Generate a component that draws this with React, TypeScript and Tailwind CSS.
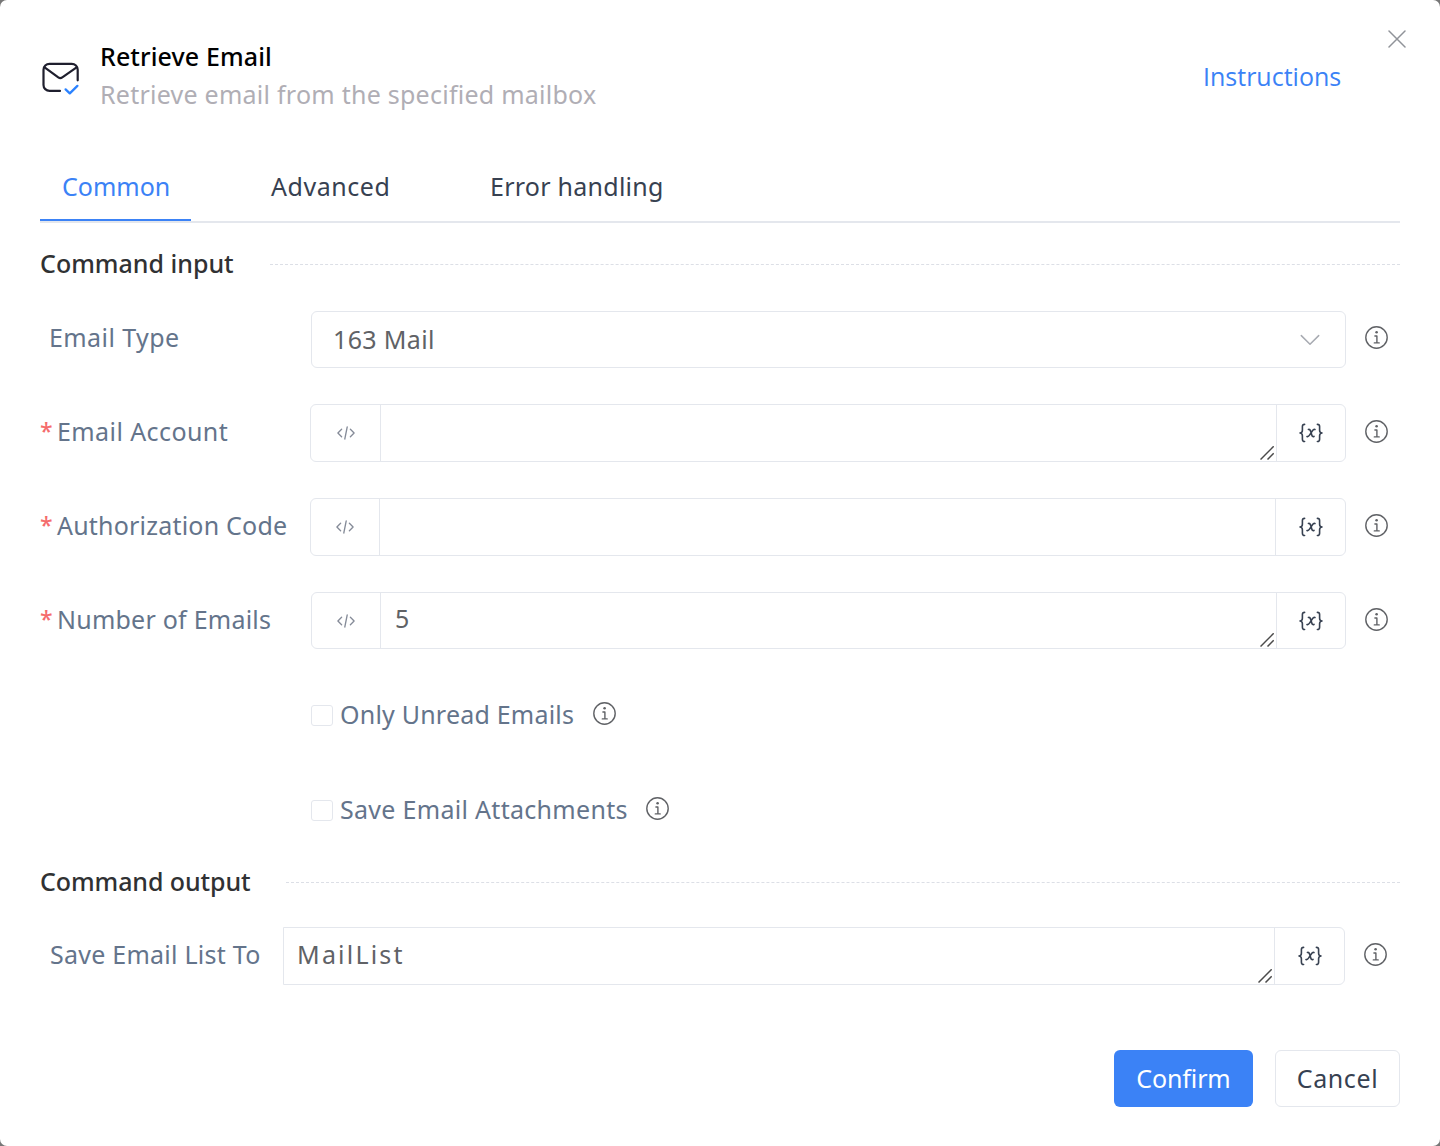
import type { ReactNode } from "react";

function MailCheckIcon() {
  return (
    <svg className="mt-[23px] h-[36px] w-[40px] shrink-0" viewBox="0 0 40 36" fill="none" strokeLinecap="round" strokeLinejoin="round">
      <path d="M20 29.9H9.5A6 6 0 0 1 3.5 23.9V8.8A6 6 0 0 1 9.5 2.8H31.7A6 6 0 0 1 37.7 8.8V19.3" stroke="#1f1f2e" strokeWidth="2.2" />
      <path d="M4.6 6.4L18.3 16.4C19.6 17.3 21 17.3 22.3 16.4L36.6 6.4" stroke="#1f1f2e" strokeWidth="2.2" />
      <path d="M25.6 28.4L29.8 32.4L37.4 24.9" stroke="#2b82ff" strokeWidth="2.3" />
    </svg>
  );
}

function CloseIcon() {
  return (
    <svg className="h-[18px] w-[18px]" viewBox="0 0 18 18" fill="none" stroke="#909399" strokeWidth="1.5" strokeLinecap="round">
      <path d="M1 1L17 17M17 1L1 17" />
    </svg>
  );
}

function InfoIcon({ className = "" }: { className?: string }) {
  return (
    <svg className={`h-[23px] w-[23px] shrink-0 ${className}`} viewBox="0 0 23 23" fill="none" stroke="#606266" strokeLinecap="round" strokeLinejoin="round">
      <circle cx="11.5" cy="11.5" r="10.7" strokeWidth="1.4" />
      <circle cx="11.6" cy="6.3" r="1.3" fill="#606266" stroke="none" />
      <path d="M9.9 10H11.9V16.8M9.3 16.9H14.2" strokeWidth="1.4" />
    </svg>
  );
}

function VariableIcon() {
  return (
    <svg className="h-[20px] w-[24px]" viewBox="0 0 24 20" fill="none" stroke="#374151" strokeWidth="1.6" strokeLinecap="round" strokeLinejoin="round">
      <path d="M5.6 1.4C3.8 1.4 3.4 2.2 3.4 3.6V7.2C3.4 8.9 2.6 9.8 1 10C2.6 10.2 3.4 11.1 3.4 12.8V16.2C3.4 17.8 3.9 18.5 5.6 18.5" />
      <path d="M18.4 1.4C20.2 1.4 20.6 2.2 20.6 3.6V7.2C20.6 8.9 21.4 9.8 23 10C21.4 10.2 20.6 11.1 20.6 12.8V16.2C20.6 17.8 20.1 18.5 18.4 18.5" />
      <path d="M9.4 6.4C10.8 6 11.2 6.8 11.6 8.2L12.8 12C13.2 13.4 13.8 13.9 15 13.4M16 6.5C14.8 6.1 14 6.9 13.1 8.2L10.7 11.9C9.8 13.3 9 13.9 8 13.5" />
    </svg>
  );
}

function CodeIcon() {
  return (
    <svg className="h-[14px] w-[18px]" viewBox="0 0 18 14" fill="none" stroke="#858b98" strokeWidth="1.3" strokeLinecap="round" strokeLinejoin="round">
      <path d="M4.6 3.3L0.9 7L4.6 10.7M13.4 3.3L17.1 7L13.4 10.7M10.2 1L7.8 13" />
    </svg>
  );
}

function ResizeHandle() {
  return (
    <svg className="mb-px mr-[2px] h-[14px] w-[14px] self-end" viewBox="0 0 14 14" fill="none" stroke="#4b4b4b" strokeWidth="1.5">
      <path d="M0.5 13.5L13.7 0.3M7.5 13.5L13.7 7.3" />
    </svg>
  );
}

function SectionTitle({ title, className, lineClass }: { title: string; className: string; lineClass: string }) {
  return (
    <div className={`flex h-[36px] items-start ${className}`}>
      <h2 className={`shrink-0 whitespace-nowrap font-medium text-[#303133] ${lineClass}`}>{title}</h2>
      <div className="mt-[19px] flex-1 border-t border-dashed border-[#dcdfe6]" />
    </div>
  );
}

function Label({ text, required, className }: { text: string; required?: boolean; className: string }) {
  return (
    <div className={`flex shrink-0 whitespace-nowrap text-[#64748b] ${className}`}>
      {required && <span className="w-[17px] text-[23px] font-medium tracking-normal text-[#f56c6c]">*</span>}
      <span>{text}</span>
    </div>
  );
}

interface FieldProps {
  label: string;
  required?: boolean;
  rowClass: string;
  labelClass: string;
  boxClass: string;
  prefixClass?: string;
  suffixClass: string;
  resizable?: boolean;
  children?: ReactNode;
}

function Field({ label, required, rowClass, labelClass, boxClass, prefixClass, suffixClass, resizable, children }: FieldProps) {
  return (
    <div className={`flex items-start ${rowClass}`}>
      <Label text={label} required={required} className={labelClass} />
      <div className={`flex h-full border border-[#e4e7ed] ${boxClass}`}>
        {prefixClass && (
          <div className={`flex shrink-0 items-center justify-center border-r border-[#e4e7ed] ${prefixClass}`}>
            <CodeIcon />
          </div>
        )}
        <div className="flex flex-1 justify-between text-[#606266]">
          <div>{children}</div>
          {resizable && <ResizeHandle />}
        </div>
        <div className={`flex shrink-0 items-center justify-center border-l border-[#e4e7ed] ${suffixClass}`}>
          <VariableIcon />
        </div>
      </div>
      <InfoIcon className="ml-[19px] mt-[16px]" />
    </div>
  );
}

function Checkbox({ label, rowClass, labelClass }: { label: string; rowClass: string; labelClass: string }) {
  return (
    <div className={`flex h-[36px] items-start pl-[271px] ${rowClass}`}>
      <span className="mt-[9px] h-[21px] w-[22px] shrink-0 rounded-[3px] border border-[#e4e7ed]" />
      <span className={`ml-[7px] shrink-0 whitespace-nowrap text-[#64748b] ${labelClass}`}>{label}</span>
      <InfoIcon className="mt-[6px]" />
    </div>
  );
}

export default function App() {
  return (
    <div className="h-[1146px] w-[1440px] bg-[#777777]">
      <div className="flex h-full flex-col rounded-[7px] bg-white px-[40px] font-['Noto_Sans','Open_Sans',sans-serif] text-[25px] leading-[36px]">
        <header className="flex h-[168px] items-start pt-[38px]">
          <MailCheckIcon />
          <div className="ml-[20px] flex flex-col gap-[2px] whitespace-nowrap">
            <h1 className="font-medium tracking-[0.11px] text-black">Retrieve Email</h1>
            <p className="tracking-[0.25px] text-[#b0aeb5]">Retrieve email from the specified mailbox</p>
          </div>
          <a className="ml-auto mt-[20px] w-[140px] whitespace-nowrap font-['Open_Sans',sans-serif] text-[#3b82f6]">Instructions</a>
          <button className="-mr-[6px] -mt-[8px] ml-[45px]" aria-label="Close">
            <CloseIcon />
          </button>
        </header>

        <nav className="flex h-[55px] items-start whitespace-nowrap border-b-2 border-[#e4e7ed] text-[#374151]">
          <div className="h-[53px] w-[151px] border-b-2 border-[#3b82f6] pl-[22px] text-[#3b82f6]">Common</div>
          <div className="ml-[57px] w-[164px] pl-[23px] tracking-[0.55px]">Advanced</div>
          <div className="ml-[55px] pl-[23px] tracking-[0.26px]">Error handling</div>
        </nav>

        <SectionTitle title="Command input" className="mt-[22px]" lineClass="w-[230px]" />

        <div className="mt-[30px] flex h-[57px] items-start">
          <Label text="Email Type" className="w-[271px] pl-[9px] pt-[8px] tracking-[0.42px]" />
          <div className="flex h-full w-[1035px] items-start justify-between rounded-[6px] border border-[#e4e7ed] pl-[21px] pr-[25px] pt-[9px] tracking-[0.35px] text-[#606266]">
            <span>163 Mail</span>
            <svg className="mt-[13px] h-[12px] w-[20px]" viewBox="0 0 20 12" fill="none" stroke="#a8abb2" strokeWidth="1.5" strokeLinecap="round" strokeLinejoin="round">
              <path d="M1.3 1.6L10 10.2L18.7 1.6" />
            </svg>
          </div>
          <InfoIcon className="ml-[19px] mt-[15px]" />
        </div>

        <Field label="Email Account" required rowClass="mt-[36px] h-[58px]" labelClass="w-[270px] pt-[9px] tracking-[0.42px]" boxClass="w-[1036px] rounded-[6px]" prefixClass="w-[70px]" suffixClass="w-[69px]" resizable />
        <Field label="Authorization Code" required rowClass="mt-[36px] h-[58px]" labelClass="w-[270px] pt-[9px] tracking-[0.21px]" boxClass="w-[1036px] rounded-[6px]" prefixClass="w-[69px]" suffixClass="w-[70px]" />
        <Field label="Number of Emails" required rowClass="mt-[36px] h-[57px]" labelClass="w-[271px] pt-[9px] tracking-[0.23px]" boxClass="w-[1035px] rounded-[6px]" prefixClass="w-[69px]" suffixClass="w-[69px]" resizable>
          <div className="pl-[14px] pt-[7px]">5</div>
        </Field>

        <Checkbox label="Only Unread Emails" rowClass="mt-[47px]" labelClass="w-[253px] tracking-[0.21px]" />
        <Checkbox label="Save Email Attachments" rowClass="mt-[59px]" labelClass="w-[306px] tracking-[0.3px]" />

        <SectionTitle title="Command output" className="mt-[36px]" lineClass="w-[246px] tracking-[-0.09px]" />

        <Field label="Save Email List To" rowClass="mt-[28px] h-[58px]" labelClass="w-[243px] pl-[10px] pt-[9px] tracking-[0.25px]" boxClass="w-[1062px] rounded-r-[6px]" suffixClass="w-[70px]" resizable>
          <div className="pl-[13px] pt-[8px] tracking-[2.2px]">MailList</div>
        </Field>

        <footer className="mt-[65px] flex h-[57px] justify-end gap-[22px] whitespace-nowrap">
          <button className="w-[139px] rounded-[6px] bg-[#3b82f6] pb-[1px] text-center tracking-[-0.12px] text-white">Confirm</button>
          <button className="w-[125px] rounded-[6px] border border-[#e4e7ed] pb-[1px] text-center tracking-[0.6px] text-[#374151]">Cancel</button>
        </footer>
      </div>
    </div>
  );
}
